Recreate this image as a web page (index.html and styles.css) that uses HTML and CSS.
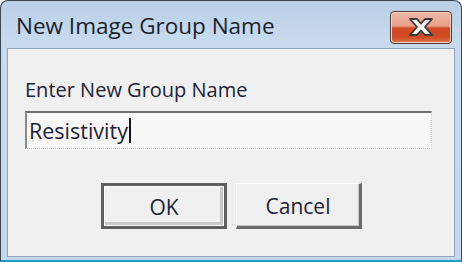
FILE: index.html
```html
<!DOCTYPE html>
<html>
  <head>
    <meta charset="utf-8">
    <title>New Image Group Name</title>
    <link rel="stylesheet" href="styles.css">
  </head>
  <body>
  <div class="window">
    <div class="titlebar">
      <div class="title">New Image Group Name</div>
      <div class="close">
        <svg width="32" height="22" viewBox="0 0 32 22">
          <path d="M5 3 L12 3 L16 7.5 L20 3 L27 3 L20 11 L27 19 L20 19 L16 14.5 L12 19 L5 19 L12 11 Z" fill="#f4f4f4" stroke="#3a3a3a" stroke-width="1.8" stroke-linejoin="round"/>
        </svg>
      </div>
    </div>
    <div class="content">
      <div class="label">Enter New Group Name</div>
      <div class="field">Resistivity<span class="caret"></span></div>
      <div class="buttons">
        <button class="btn default">OK</button>
        <button class="btn">Cancel</button>
      </div>
    </div>
  </div>
  </body>
</html>
```

FILE: styles.css
```css
body {
  margin: 0;
  padding: 0;
  font-family: "Open Sans", "DejaVu Sans", sans-serif;
  background-color: #ffffff;
}
.window {
  width: 462px;
  height: 262px;
  box-sizing: border-box;
  display: flex;
  flex-direction: column;
  border: 1px solid #3b4654;
  border-bottom: 2px solid #1c9fc6;
  border-radius: 8px 8px 0 0;
  background: linear-gradient(#b9cfe6, #c8daee 40px, #c4d8ee);
  padding: 0 6px 3px 6px;
}
.titlebar {
  height: 47px;
  display: flex;
  align-items: center;
  justify-content: space-between;
  padding-left: 9px;
  padding-right: 3px;
}
.title {
  font-size: 22.5px;
  color: #1a1f2c;
  margin-top: 2px;
}
.close {
  width: 62px;
  height: 33px;
  margin-top: 5px;
  box-sizing: border-box;
  border: 1px solid #5a3b35;
  border-radius: 4px;
  background: linear-gradient(#f0b7a4, #e8a18b 45%, #d24a22 52%, #cf4a22 80%, #e07a50);
  box-shadow: inset 0 0 0 1px #f6d6c8;
  display: flex;
  align-items: center;
  justify-content: center;
}
.content {
  flex: 1;
  background-color: #f0f0f0;
  border: 1px solid #8fa5bf;
  padding: 0 0 0 17px;
}
.label {
  font-size: 20px;
  color: #1d2236;
  margin-top: 28px;
  line-height: 26px;
}
.field {
  width: 407px;
  height: 38px;
  margin-top: 8px;
  box-sizing: border-box;
  background-color: #f8f8f8;
  border-top: 2px solid #6f6f6f;
  border-left: 2px solid #8a8a8a;
  border-right: 1px dotted #d0d0d0;
  border-bottom: 1px dotted #d0d0d0;
  font-size: 21.5px;
  color: #1d2236;
  line-height: 34px;
  padding-left: 2px;
  display: flex;
  align-items: center;
}
.caret {
  display: inline-block;
  width: 2px;
  height: 25px;
  background-color: #111111;
  margin-left: 1px;
}
.buttons {
  display: flex;
  gap: 9px;
  margin-top: 34px;
  padding-left: 76px;
}
.btn {
  width: 126px;
  height: 46px;
  box-sizing: border-box;
  font-family: "Open Sans", "DejaVu Sans", sans-serif;
  font-size: 21px;
  color: #1d2236;
  background-color: #f0f0f0;
  border-top: 1px solid #ffffff;
  border-left: 1px solid #ffffff;
  border-right: 3px solid #6a6a6a;
  border-bottom: 3px solid #6a6a6a;
  box-shadow: inset -1px -1px 0 #c8c8c8;
  padding: 2px 0 0 0;
}
.btn.default {
  border: 3px solid #5e5e5e;
  box-shadow: inset 0 0 0 1px #ffffff, inset -2px -2px 0 2px #c8c8c8;
}
```
